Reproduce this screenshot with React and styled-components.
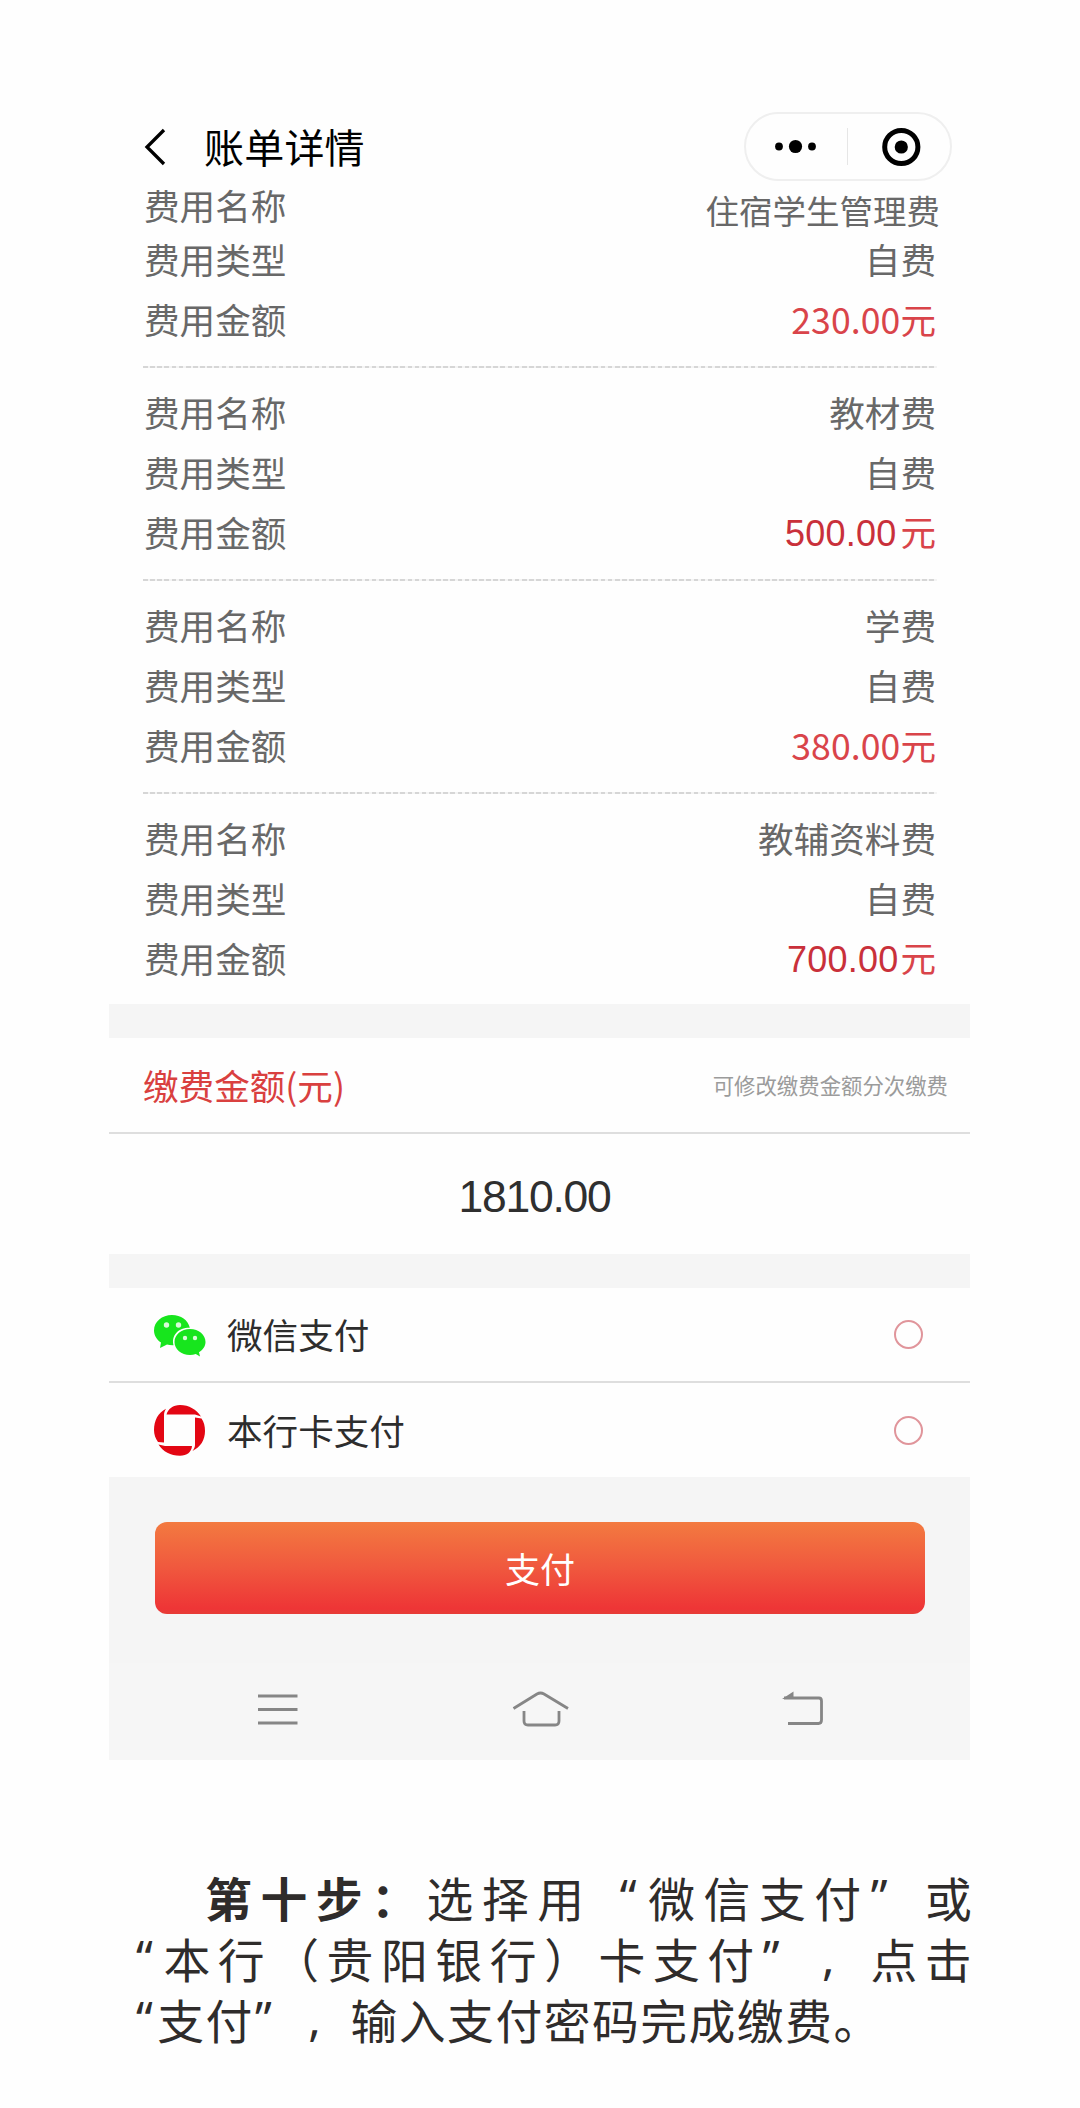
import React, { useState } from 'react';
import styled, { createGlobalStyle } from 'styled-components';

const GlobalStyle = createGlobalStyle`
  * {
    box-sizing: border-box;
  }

  body {
    margin: 0;
    background: #fefefe;
    font-family: "Noto Sans CJK SC", sans-serif;
  }
`;

const Page = styled.main`
  width: 1080px;
  height: 2108px;
  padding: 112px 110px 0 109px;
  overflow: hidden;
`;

const Screen = styled.section`
  width: 861px;
  height: 1648px;
`;

const Header = styled.header`
  display: flex;
  align-items: center;
  height: 69px;
  padding: 0 18px 0 35px;
`;

const BackIcon = styled.svg`
  width: 22px;
  height: 40px;
`;

const Title = styled.h1`
  flex: 1;
  margin: 0 0 0 38px;
  padding-bottom: 2px;
  font-size: 40px;
  font-weight: 400;
  letter-spacing: 0.2px;
  line-height: 64px;
  color: #000;
`;

const Capsule = styled.div`
  width: 208px;
  height: 69px;
  border: 2px solid #efefef;
  border-radius: 35px;

  svg {
    display: block;
  }
`;

const FeeGroup = styled.div`
  margin: 0 33px 0 34px;
  padding: ${props => props.$first ? '0' : '14px'} 0 ${props => props.$last ? '16px' : '17px'};
`;

const Divider = styled.div`
  height: 2px;
  margin: 0 33px 0 34px;
  background: repeating-linear-gradient(to right, #d6d6d6 0 4.6px, #f4f4f4 4.6px 7.15px);
`;

const FeeRow = styled.div`
  display: flex;
  justify-content: space-between;
  align-items: center;
  height: ${props => props.$short ? '48px' : '60px'};
  padding: 0 1px;
  font-size: 35.6px;
  line-height: 46px;
  color: #686868;
`;

const LongValue = styled.span`
  margin-right: -4px;
  padding-top: 10px;
  font-size: 33.5px;
`;

const Money = styled.span`
  color: #d9444a;
`;

const Digits = styled.span`
  margin-right: ${props => props.$gap || 0}px;
  font-family: ${props => props.$arial ? '"Liberation Sans", Arial' : '"Noto Sans CJK SC"'}, sans-serif;
  font-size: ${props => props.$arial ? '36px' : '35.6px'};
  letter-spacing: ${props => props.$arial ? '0.2px' : '0.1px'};
  color: ${props => props.$arial ? '#c9303a' : '#d9444a'};
`;

const Band = styled.div`
  height: 34px;
  background: #f5f5f5;
`;

const AmountHeader = styled.div`
  display: flex;
  justify-content: space-between;
  align-items: center;
  height: 96px;
  padding: 0 22px 1px 34px;
  border-bottom: 2px solid #dedede;
`;

const AmountLabel = styled.span`
  font-size: 35.6px;
  line-height: 48px;
  color: #d9403f;
`;

const AmountHint = styled.span`
  font-size: 21.4px;
  line-height: 32px;
  color: #9b9b9b;
`;

const Amount = styled.div`
  display: flex;
  justify-content: center;
  align-items: center;
  height: 120px;
  padding: 5px 10px 0 0;
  font-family: "Liberation Sans", Arial, sans-serif;
  font-size: 44.5px;
  letter-spacing: -1.3px;
  color: #2f2f2f;
`;

const PayRow = styled.button`
  display: flex;
  align-items: center;
  width: 100%;
  height: ${props => props.$line ? '95px' : '94px'};
  padding: 0 47px 0 45px;
  border: 0;
  border-bottom: ${props => props.$line ? '2px solid #dedede' : '0'};
  background: transparent;
  font-family: inherit;
  text-align: left;
  cursor: pointer;
`;

const PayIcon = styled.svg`
  width: 52px;
  height: 52px;
  flex: none;
`;

const PayName = styled.span`
  flex: 1;
  margin-left: 21px;
  padding-bottom: 1px;
  font-size: 35.6px;
  line-height: 48px;
  color: #2d2d2d;
`;

const Radio = styled.span`
  width: 29px;
  height: 29px;
  border: 2px solid #e0959b;
  border-radius: 50%;
  background: ${props => props.$checked ? '#e0959b' : 'transparent'};
`;

const Footer = styled.div`
  height: 186px;
  padding: 45px 45px 0 46px;
  background: #f5f5f5;
`;

const PayButton = styled.button`
  display: block;
  width: 100%;
  height: 92px;
  padding: 0 0 2px;
  border: 0;
  border-radius: 12px;
  background: linear-gradient(#f37a40, #f0583e 50%, #ee3536 94%, #e63c36);
  font-family: inherit;
  font-size: 35px;
  color: #fff;
  cursor: pointer;
`;

const NavBar = styled.nav`
  height: 97px;
  background: #f6f6f6;

  svg {
    display: block;
  }
`;

const Steps = styled.p`
  margin: 106px 0 0;
  color: #2f2c2b;
`;

const Line = styled.span`
  display: flex;
  height: 61px;
  padding-left: ${props => props.$indent || 0}px;
  font-size: 46.8px;
  line-height: 61px;
  white-space: nowrap;
`;

const Cell = styled.span`
  flex: none;
  width: ${props => props.$pitch}px;
  font-weight: ${props => props.$bold ? 700 : 400};
`;

// Latin-style quotes and commas keep a full-width cell
const Mark = styled(Cell)`
  padding-left: ${props => props.$side === 'right' ? 27 : props.$side === 'comma' ? 6 : 1}px;
  font-family: "Noto Sans", sans-serif;
`;

const fees = [
  { name: '住宿学生管理费', type: '自费', amount: '230.00' },
  { name: '教材费', type: '自费', amount: '500.00', arial: true, gap: 4 },
  { name: '学费', type: '自费', amount: '380.00' },
  { name: '教辅资料费', type: '自费', amount: '700.00', arial: true, gap: 2 },
];

const lines = [
  { text: '第十步：选择用“微信支付”或', pitch: 55.4, indent: 96 },
  { text: '“本行（贵阳银行）卡支付”，点击', pitch: 54.4 },
  { text: '“支付”，输入支付密码完成缴费。', pitch: 48.3 },
];

const marks = { '“': 'right', '”': 'left', '，': 'comma' };

const WechatIcon = () => (
  <PayIcon viewBox="0 0 52 52">
    <path fill="#17e51d" d="M18 6C8 6 0 12.700 0 21.500c0 5 2.800 9.300 7 12L6 39l7-3.500c2 .5 4 .8 6.500.7C17 26 25 18.500 35.800 18.800 34 11 27 6 18 6z" />
    <path fill="#17e51d" d="M36 20c-8.800 0-15.500 5.800-15.500 13S27.200 46 36 46c2 0 4-.3 5.800-.9L46 47.500l-1-4.300c4-2.500 6.500-6 6.500-10.200C51.500 25.800 44.800 20 36 20z" />
    <circle cx="12.500" cy="16" r="2.700" fill="#d8fad8" />
    <circle cx="24.500" cy="16" r="2.700" fill="#d8fad8" />
    <circle cx="31" cy="29" r="2.200" fill="#d8fad8" />
    <circle cx="41" cy="29" r="2.200" fill="#d8fad8" />
  </PayIcon>
);

const BankIcon = () => (
  <PayIcon viewBox="0 0 52 52">
    <g fill="#e30613">
      <path d="M12.500 10.500C14 5 19 1 26 1 35 1 42.500 5.500 47 12.500L41 10.500z" />
      <path d="M41 13.500L47.500 14.500C50 18 51 22 51 27 51 36 46.500 43 38.500 47 40 45 41 43 41 41z" />
      <path d="M38 42C37.500 48 33 51.800 26 51.800 16.500 51.800 9 47.500 4.500 40.500L11 42z" />
      <path d="M10 38.500L4 38C1.500 34.500 0 30.500 0 26 0 16.500 4 9 12 4.800 10.500 7 10 9 10 11.500z" />
    </g>
  </PayIcon>
);

const NavIcons = () => (
  <svg width="861" height="97" viewBox="0 0 861 97" fill="none" stroke="#868686" strokeWidth="2.800">
    <path d="M149 33h39.500M149 46.500h39.500M149 60h39.500" />
    <path d="M404.500 45.500L428 31Q431.500 29 435 31L459 45.500" />
    <path d="M415 48V58Q415 62 419 62H446Q450 62 450 58V48" />
    <path d="M675 35H710Q712.500 35 712.500 38V57Q712.500 60.500 709.500 60.500H679" />
    <path d="M673 36L684.500 28.500V36z" fill="#868686" stroke="none" />
  </svg>
);

const App = () => {
  const [method, setMethod] = useState(null);

  return (
    <>
      <GlobalStyle />
      <Page>
        <Screen>
          <Header>
            <BackIcon viewBox="0 0 22 40" fill="none" stroke="#000" strokeWidth="3.300">
              <path d="M20 3L3 20L20 37" />
            </BackIcon>
            <Title>账单详情</Title>
            <Capsule>
              <svg width="204" height="65" viewBox="0 0 204 65">
                <circle cx="33" cy="32.500" r="3.900" />
                <circle cx="49.500" cy="32.500" r="6.600" />
                <circle cx="66" cy="32.500" r="3.900" />
                <path d="M101.500 14V51" stroke="#e6e6e6" />
                <circle cx="155.300" cy="33" r="16.600" fill="none" stroke="#000" strokeWidth="5" />
                <circle cx="155.300" cy="33" r="6.600" />
              </svg>
            </Capsule>
          </Header>

          {fees.map((fee, index) => (
            <React.Fragment key={fee.name}>
              <FeeGroup $first={index === 0} $last={index === fees.length - 1}>
                <FeeRow $short={index === 0}>
                  <span>费用名称</span>
                  {index === 0 ? <LongValue>{fee.name}</LongValue> : <span>{fee.name}</span>}
                </FeeRow>
                <FeeRow>
                  <span>费用类型</span>
                  <span>{fee.type}</span>
                </FeeRow>
                <FeeRow>
                  <span>费用金额</span>
                  <Money>
                    <Digits $arial={fee.arial} $gap={fee.gap}>{fee.amount}</Digits>元
                  </Money>
                </FeeRow>
              </FeeGroup>
              {index < fees.length - 1 && <Divider />}
            </React.Fragment>
          ))}

          <Band />
          <AmountHeader>
            <AmountLabel>缴费金额(元)</AmountLabel>
            <AmountHint>可修改缴费金额分次缴费</AmountHint>
          </AmountHeader>
          <Amount>1810.00</Amount>
          <Band />

          <PayRow $line onClick={() => setMethod('wechat')}>
            <WechatIcon />
            <PayName>微信支付</PayName>
            <Radio $checked={method === 'wechat'} />
          </PayRow>
          <PayRow onClick={() => setMethod('card')}>
            <BankIcon />
            <PayName>本行卡支付</PayName>
            <Radio $checked={method === 'card'} />
          </PayRow>

          <Footer>
            <PayButton>支付</PayButton>
          </Footer>
          <NavBar>
            <NavIcons />
          </NavBar>
        </Screen>

        <Steps>
          {lines.map((line, row) => (
            <Line key={line.text} $indent={line.indent}>
              {[...line.text].map((char, i) => (
                marks[char]
                  ? <Mark key={i} $pitch={line.pitch} $side={marks[char]}>{char === '，' ? ',' : char}</Mark>
                  : <Cell key={i} $pitch={line.pitch} $bold={row === 0 && i < 4}>{char}</Cell>
              ))}
            </Line>
          ))}
        </Steps>
      </Page>
    </>
  );
};

export default App;
